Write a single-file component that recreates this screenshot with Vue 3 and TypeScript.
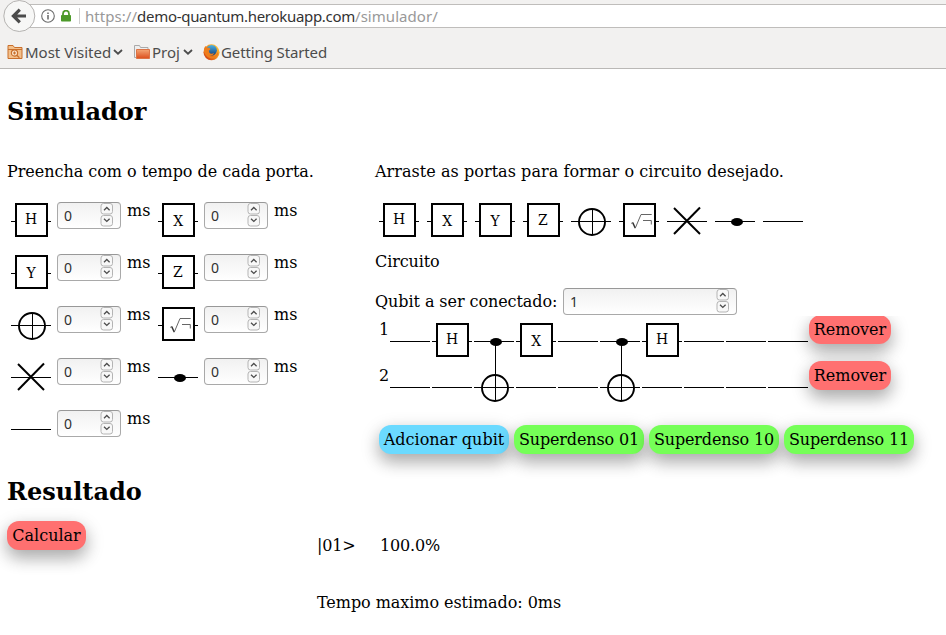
<script setup lang="ts">
import { defineComponent, h, ref, type VNode } from 'vue'

type Kind = 'H' | 'X' | 'Y' | 'Z' | 'not' | 'sqrt' | 'swap' | 'dot' | 'wire' | 'control'

const letterPos: Record<string, [number, number]> = {
  H: [20, 23],
  X: [20.2, 25],
  Y: [20, 25],
  Z: [19.8, 24],
}

const Gate = defineComponent({
  props: { kind: { type: String, required: true } },
  setup(props) {
    const line = (x1: number, y1: number, x2: number, y2: number, w = 1): VNode =>
      h('line', { x1, y1, x2, y2, stroke: '#000', 'stroke-width': w })
    const box = (): VNode =>
      h('rect', { x: 5, y: 3, width: 31, height: 32, fill: '#fff', stroke: '#000', 'stroke-width': 2 })
    return () => {
      const k = props.kind as Kind
      const parts: VNode[] = [line(0, 20.5, 40, 20.5)]
      if (k in letterPos) {
        const [x, y] = letterPos[k]
        parts.push(box(), h('text', { x, y, 'text-anchor': 'middle' }, k))
      } else if (k === 'sqrt') {
        parts.push(
          box(),
          h('path', { d: 'M12 22.5l1.8-1', fill: 'none', stroke: '#666', 'stroke-width': 0.8 }),
          h('path', { d: 'M13.7 21.5L16.2 27', fill: 'none', stroke: '#333', 'stroke-width': 1.5 }),
          h('path', { d: 'M16.2 27.3L22 13.5h10.7M24 19.5h8.3v4', fill: 'none', stroke: '#555', 'stroke-width': 0.9 }),
        )
      } else if (k === 'not') {
        parts.push(
          h('circle', { cx: 21, cy: 21, r: 13, fill: 'none', stroke: '#000', 'stroke-width': 1.9 }),
          line(21.5, 8, 21.5, 34),
        )
      } else if (k === 'swap') {
        parts.push(line(7, 7, 33, 33, 2), line(33, 6.5, 7, 33, 2))
      } else if (k === 'dot' || k === 'control') {
        parts.push(h('ellipse', { cx: 22, cy: 21, rx: 6, ry: 4 }))
        if (k === 'control') parts.push(line(21.5, 21, 21.5, 56))
      }
      return h('svg', { class: 'gate', width: 40, height: 40, viewBox: '0 0 40 40' }, parts)
    }
  },
})

const NumberField = defineComponent({
  props: { value: { type: Number, required: true } },
  setup(props) {
    const step = (d: string): VNode =>
      h('svg', { class: 'step', width: 13, height: 12, viewBox: '0 0 13 12' }, [
        h('rect', { x: 1, y: 0.5, width: 11.5, height: 10.5, rx: 2.5, fill: '#f8f8f8', stroke: '#b4b4b4' }),
        h('path', { d, fill: 'none', stroke: '#4c4c4c', 'stroke-width': 1.3 }),
      ])
    return () =>
      h('span', { class: 'field' }, [
        h('span', { class: 'field-value' }, String(props.value)),
        h('span', { class: 'steps' }, [step('M4 7.2l2.8-2.7 2.8 2.7'), step('M4 3.7l2.8 2.7 2.8-2.7')]),
      ])
  },
})

const times = ref<{ kind: Kind; ms: number }[]>([
  { kind: 'H', ms: 0 },
  { kind: 'X', ms: 0 },
  { kind: 'Y', ms: 0 },
  { kind: 'Z', ms: 0 },
  { kind: 'not', ms: 0 },
  { kind: 'sqrt', ms: 0 },
  { kind: 'swap', ms: 0 },
  { kind: 'dot', ms: 0 },
  { kind: 'wire', ms: 0 },
])
const palette: Kind[] = ['H', 'X', 'Y', 'Z', 'not', 'sqrt', 'swap', 'dot', 'wire']
const circuit: Kind[][] = [
  ['wire', 'H', 'control', 'X', 'wire', 'control', 'H', 'wire', 'wire', 'wire'],
  ['wire', 'wire', 'not', 'wire', 'wire', 'not', 'wire', 'wire', 'wire', 'wire'],
]
const presets = ['01', '10', '11']
</script>

<template>
  <div class="window">
    <header class="chrome">
      <div class="toolbar">
        <svg class="back" width="33" height="33" viewBox="0 0 33 33">
          <circle cx="16.3" cy="16" r="15.5" fill="#f7f7f6" stroke="#b5b3b1" />
          <path d="M23 16H11.5M16.8 9.6L10.4 16l6.4 6.4" fill="none" stroke="#4b4b4b" stroke-width="3.2" />
        </svg>
        <div class="urlbar">
          <svg width="14" height="14" viewBox="0 0 14 14">
            <circle cx="7" cy="7" r="6.3" fill="none" stroke="#6b6b6b" stroke-width="1.1" />
            <path d="M7 6v4.5M7 3.4v1.5" stroke="#666" stroke-width="1.5" />
          </svg>
          <svg class="lock" width="12" height="12" viewBox="0 0 12 12">
            <path d="M3 6V3.7a3 3 0 0 1 6 0V6" fill="none" stroke="#4d9a2a" stroke-width="1.8" />
            <rect x="1" y="5" width="10" height="6.6" rx=".8" fill="#4d9a2a" />
          </svg>
          <span class="divider"></span>
          <span class="url">https://<b>demo-quantum.herokuapp.com</b>/simulador/</span>
        </div>
      </div>
      <nav class="bookmarks">
        <svg width="16" height="16" viewBox="0 0 16 16">
          <path d="M1 14.5V1.5h5l1.5 2H15v11z" fill="#f3c08b" stroke="#c96f2b" />
          <path d="M1 5.5h14" stroke="#c96f2b" />
          <circle cx="7.5" cy="9" r="3.1" fill="#fbe6cf" stroke="#c96f2b" stroke-width="1.2" />
          <path d="M9.8 11.3l2.6 2.4M7.5 7.5v3M6 9h3" stroke="#c96f2b" stroke-width="1.2" />
        </svg>
        <span class="label most">Most Visited</span>
        <svg class="caret" width="10" height="8" viewBox="0 0 10 8"><path d="M1 2l4 3.7L9 2" fill="none" stroke="#4c4c4c" stroke-width="1.8" /></svg>
        <svg class="folder" width="16" height="16" viewBox="0 0 16 16">
          <defs>
            <linearGradient id="fold" x1="0" y1="0" x2="0" y2="1">
              <stop offset="0" stop-color="#f4a675" /><stop offset="1" stop-color="#dc4e1c" />
            </linearGradient>
          </defs>
          <path d="M.5 13.5V1.5h5l1 2H14v10z" fill="#eee" stroke="#aaa" />
          <path d="M2.5 5.5h13v9h-13z" fill="url(#fold)" stroke="#dc7446" />
        </svg>
        <span class="label proj">Proj</span>
        <svg class="caret" width="10" height="8" viewBox="0 0 10 8"><path d="M1 2l4 3.7L9 2" fill="none" stroke="#4c4c4c" stroke-width="1.8" /></svg>
        <svg class="fox" width="17" height="17" viewBox="0 0 17 17">
          <defs>
            <linearGradient id="flame" x1="1" y1="0" x2="0" y2="1">
              <stop offset="0" stop-color="#ffd23c" /><stop offset=".5" stop-color="#f08a1d" /><stop offset="1" stop-color="#c92a10" />
            </linearGradient>
            <linearGradient id="globe" x1="0" y1="0" x2="0" y2="1">
              <stop offset="0" stop-color="#4bb4e6" /><stop offset="1" stop-color="#143c78" />
            </linearGradient>
          </defs>
          <circle cx="8.5" cy="8.3" r="8" fill="url(#flame)" />
          <circle cx="8.6" cy="6.2" r="5.3" fill="url(#globe)" />
          <path d="M1 8C.6 5 1.5 3 2.6 2l.8 1.7L6 3.8 7.600 5 5.800 6.800l.6 2c1 1.400 3.300 1 4.600.3-.5 2-2.400 3-4.600 2.700 3 2.400 7 .8 8-3.700l.9 1.400C14 15 5 17.500 1 8z" fill="#ee7d1c" />
        </svg>
        <span class="label start">Getting Started</span>
      </nav>
    </header>

    <main class="page">
      <h2 class="sim">Simulador</h2>
      <div class="columns">
        <section class="times">
          <p class="t-fill">Preencha com o tempo de cada porta.</p>
          <div class="time-grid">
            <div v-for="t in times" :key="t.kind" class="time">
              <Gate :kind="t.kind" />
              <NumberField :value="t.ms" />
              <span class="unit">ms</span>
            </div>
          </div>
        </section>

        <section class="builder">
          <p class="t-drag">Arraste as portas para formar o circuito desejado.</p>
          <div class="palette">
            <Gate v-for="k in palette" :key="k" :kind="k" />
          </div>
          <p class="circuit-title">Circuito</p>
          <label class="connect">
            <span class="t-connect">Qubit a ser conectado:</span>
            <NumberField class="wide" :value="1" />
          </label>
          <div class="circuit">
            <div v-for="(row, i) in circuit" :key="i" class="wire-row">
              <span class="wire-no">{{ i + 1 }}</span>
              <div class="cells">
                <Gate v-for="(k, j) in row" :key="j" :kind="k" />
              </div>
              <button class="btn red remove">Remover</button>
            </div>
          </div>
          <div class="actions">
            <button class="btn blue">Adcionar qubit</button>
            <button v-for="p in presets" :key="p" class="btn green">Superdenso {{ p }}</button>
          </div>
        </section>
      </div>

      <h2 class="res">Resultado</h2>
      <div class="result">
        <button class="btn red calc">Calcular</button>
        <div class="output">
          <p class="state"><span class="ket">|01&gt;</span><span class="prob">100.0%</span></p>
          <p class="estimate">Tempo maximo estimado: 0ms</p>
        </div>
      </div>
    </main>
  </div>
</template>

<style>
body {
  margin: 0;
  background: #fff;
  overflow: hidden;
}
.gate {
  display: block;
  flex: none;
  overflow: visible;
  font: 15.5px 'DejaVu Serif Condensed', 'DejaVu Serif', serif;
}
.field {
  box-sizing: border-box;
  display: flex;
  justify-content: space-between;
  flex: none;
  width: 64px;
  height: 27px;
  padding: 0 7px 0 6px;
  border: 1px solid #a9a9a9;
  border-top-color: #989898;
  border-radius: 4px;
  background: linear-gradient(#f1f1f1, #fff);
  font: 14px/26px 'Noto Sans', sans-serif;
  color: #303030;
}
.steps {
  display: flex;
  flex-direction: column;
}
.step {
  display: block;
}
.step + .step {
  margin-top: 0;
}
.field.wide {
  width: 174px;
}
</style>

<style scoped>
.window {
  width: 946px;
  height: 635px;
  overflow: hidden;
  font: 16px/22px 'DejaVu Serif', serif;
  color: #000;
}
p,
h2 {
  margin: 0;
}
p {
  height: 20px;
}
.chrome {
  box-sizing: border-box;
  height: 69px;
  border-bottom: 1px solid #bab8b6;
  background: #f2f1f0;
  font-family: 'Noto Sans', sans-serif;
  font-size: 15px;
  color: #4c4c4c;
}
.toolbar {
  display: flex;
  height: 35px;
  padding-left: 3px;
}
.back {
  position: relative;
  flex: none;
}
.urlbar {
  box-sizing: border-box;
  display: flex;
  align-items: center;
  flex: 1;
  height: 24px;
  margin: 4px 0 0 -12px;
  padding-left: 17px;
  border: solid #bfbdbb;
  border-width: 1px 0;
  background: #fff;
}
.lock {
  margin-left: 5px;
}
.divider {
  width: 1px;
  height: 16px;
  margin: 0 5px 0 7px;
  background: #cfcfcf;
}
.url {
  color: #999;
  letter-spacing: 0.05px;
  white-space: nowrap;
}
.url b {
  font-weight: 400;
  letter-spacing: -0.3px;
  color: #333;
}
.bookmarks {
  display: flex;
  align-items: center;
  height: 34px;
  padding-left: 7px;
  white-space: nowrap;
}
.label {
  margin-left: 2px;
}
.most {
  width: 87px;
}
.proj {
  width: 30px;
}
.caret {
  margin-left: 1px;
}
.folder {
  margin-left: 11px;
}
.fox {
  margin-left: 10px;
}
.start {
  margin-left: 1px;
  letter-spacing: -0.12px;
}
.page {
  padding: 28px 7px 0;
}
h2 {
  height: 28px;
  font-size: 24px;
  line-height: 30px;
}
.columns {
  display: flex;
  height: 316px;
  padding-top: 36px;
}
.times {
  width: 368px;
}
.t-fill {
  letter-spacing: -0.03px;
}
.t-drag {
  letter-spacing: 0.05px;
}
.time-grid {
  display: grid;
  grid-template-columns: 147px 147px;
  grid-auto-rows: 52px;
  padding: 20px 0 0 4px;
}
.time {
  display: flex;
}
.time .field {
  margin: 1px 6px 0 6px;
}
.unit {
  margin-top: -1px;
}
.palette {
  display: flex;
  gap: 8px;
  padding: 20px 0 10px 4px;
}
.circuit-title {
  letter-spacing: -0.1px;
}
.connect {
  display: flex;
  margin-top: 17px;
}
.t-connect {
  width: 188px;
  padding-top: 3px;
  letter-spacing: -0.07px;
  white-space: nowrap;
}
.circuit {
  height: 106px;
  clip-path: inset(1px -40px -20px 0);
}
.wire-row {
  display: flex;
  height: 46px;
}
.wire-no {
  width: 11px;
  padding: 4px 0 0 4px;
}
.cells {
  display: flex;
  gap: 2px;
  padding-top: 6px;
}
.btn {
  height: 29px;
  padding: 1px 0 0;
  border: 0;
  border-radius: 12px;
  font: inherit;
  color: #000;
  white-space: nowrap;
  box-shadow: 0 8px 16px rgba(0, 0, 0, 0.2), 0 6px 20px rgba(0, 0, 0, 0.19);
}
.red {
  background: #ff7070;
}
.blue {
  background: #6bdaff;
}
.green {
  background: #75ff57;
  letter-spacing: -0.14px;
}
.remove {
  width: 82px;
  margin-left: 1px;
}
.actions {
  display: flex;
  gap: 5px;
  margin-top: 4px;
  padding-left: 4px;
}
.actions .btn {
  width: 130px;
}
.result {
  display: flex;
  padding-top: 16px;
}
.calc {
  width: 79px;
}
.output {
  margin-left: 231px;
  padding-top: 14px;
}
.state {
  display: flex;
  letter-spacing: -0.18px;
}
.ket {
  width: 63px;
}
.estimate {
  margin-top: 37px;
  letter-spacing: -0.06px;
}
</style>
